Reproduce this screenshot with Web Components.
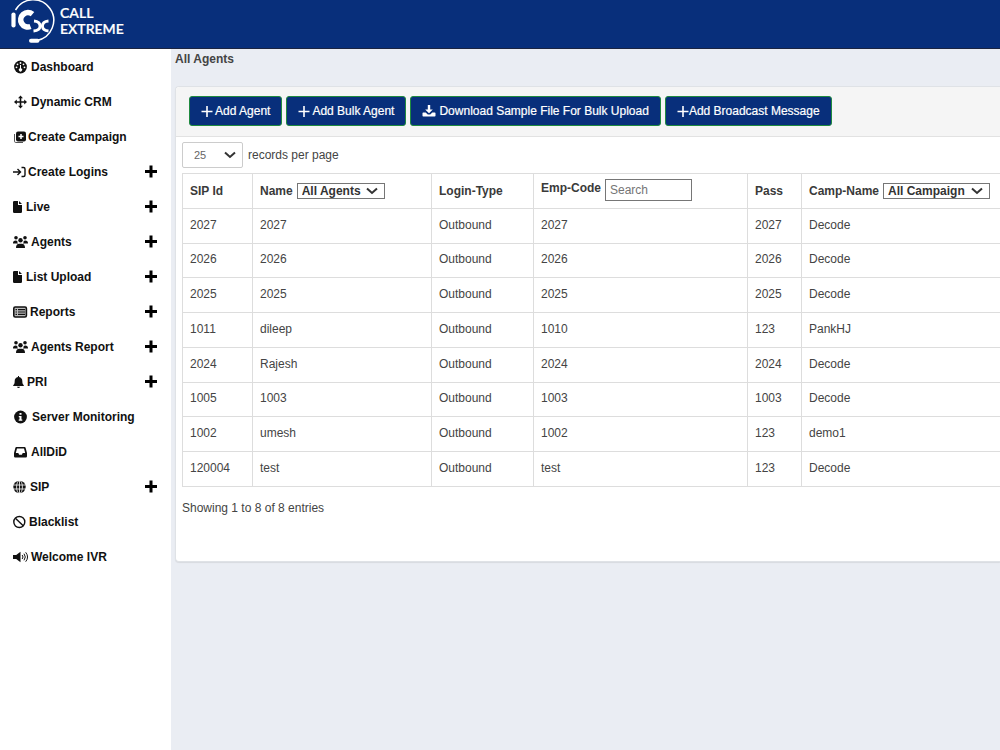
<!DOCTYPE html>
<html lang="en">
<head>
<meta charset="utf-8">
<meta name="viewport" content="width=device-width, initial-scale=1">
<title>Call Extreme - All Agents</title>
<style>
html, body { margin: 0; min-height: 100%; }
body { background: #eaedf3; font: 12px/18px "Liberation Sans", Arial, sans-serif; color: #444; }
</style>
</head>
<body>
<call-app></call-app>
<script>
const define = (name, html, setup) => {
  const template = document.createElement('template');
  template.innerHTML = html;
  customElements.define(name, class extends HTMLElement {
    constructor() {
      super();
      this.attachShadow({ mode: 'open' }).append(template.content.cloneNode(true));
    }
    connectedCallback() {
      if (setup && !this.ready) { this.ready = true; setup(this, this.shadowRoot); }
    }
  });
};

// Each icon: [width, markup]; all are 14 units high.
const people = '<circle cx="3" cy="2.800" r="1.800"/><circle cx="12" cy="2.800" r="1.800"/><circle cx="7.500" cy="5.300" r="2.200"/><path d="M0 8.200C0 6.400 1 5.400 2.600 5.400c.8 0 1.400.2 1.800.5-.2 1 .1 2 .8 2.700H.4Q0 8.600 0 8.200zM15 8.200c0-1.800-1-2.800-2.600-2.800-.8 0-1.400.2-1.800.5.2 1-.1 2-.8 2.700h4.800q.4 0 .4-.4zM3 12.400c0-2.300 1.300-3.700 3.200-3.700h2.600c1.900 0 3.200 1.400 3.200 3.700q0 .6-.6.6H3.600q-.6 0-.6-.6z"/>';
const doc = '<path d="M1.200 1H5v4h4v6.800q0 1.200-1.200 1.200H1.200Q0 13 0 11.800V2.200Q0 1 1.200 1zM6 1l3 3H6z"/>';
const ICONS = {
  dashboard: [15, '<circle cx="7.500" cy="7" r="6.400"/><g fill="#fff"><circle cx="7.500" cy="3" r=".9"/><circle cx="4.500" cy="4.300" r=".9"/><circle cx="3.500" cy="7.300" r=".9"/><circle cx="10.500" cy="4.300" r=".9"/><circle cx="11.500" cy="7.300" r=".9"/><path d="M7 5h1v3.300a1.600 1.600 0 1 1-1 0z"/></g>'],
  move: [15, '<path d="M7.500.5 10 3.300H8.300v2.900h2.900V4.500L14 7l-2.800 2.500V7.800H8.300v2.900H10l-2.500 2.800L5 10.700h1.700V7.800H3.800v1.700L1 7l2.800-2.500v1.700h2.900V3.300H5z"/>'],
  campaign: [12, '<path d="M1.500 4v7.200q0 1.300 1.300 1.300H10" fill="none" stroke="#555" stroke-width="1"/><rect x="3" y="1.500" width="10" height="10" rx="2"/><path d="M8 4v5M5.500 6.500h5" stroke="#fff" stroke-width="1.500"/>'],
  login: [12, '<path d="M0 7h7M4.500 4 7.500 7l-3 3M8.500 2.500h2q1.500 0 1.500 1.500v6q0 1.500-1.500 1.500h-2" fill="none" stroke="currentColor" stroke-width="1.400"/>'],
  file: [10, doc],
  people: [15, people],
  list: [14, '<rect x=".8" y="2" width="12.600" height="10" rx="1.400" fill="#bbb" stroke="currentColor" stroke-width="1.600"/><path d="M2.500 4.700h1.500M5 4.700h7M2.500 7h1.500M5 7h7M2.500 9.300h1.500M5 9.300h7" stroke="currentColor" stroke-width="1.200"/>'],
  bell: [11, '<path d="M5 1h1v1c2.200.4 3.300 2 3.300 4 0 2.500.5 3.400 1.500 4.200V11H.2v-.8C1.200 9.400 1.700 8.500 1.700 6c0-2 1.100-3.600 3.300-4zM4 11.700h3q-.3 1.300-1.500 1.300T4 11.700z"/>'],
  info: [16, '<circle cx="7.500" cy="7" r="6.400"/><path d="M6.500 3h2v1.800h-2zM5.800 5.900h2.700v3.500h.8v1.300H5.700V9.400h.8V7.200h-.7z" fill="#fff"/>'],
  inbox: [15, '<path d="M3.400 2h8.200q.8 0 1 .8L14 8v3.300q0 1.200-1.200 1.200H2.200Q1 12.500 1 11.300V8l1.400-5.200q.2-.8 1-.8zm.6 1.500L2.800 8h2.500l.8 1.700h2.800L9.700 8h2.500L11 3.500z" fill-rule="evenodd"/>'],
  globe: [14, '<circle cx="6.500" cy="7" r="6.200"/><path d="M0 5h13M0 9h13M6.500 0v14" stroke="#fff" stroke-width=".8"/><ellipse cx="6.500" cy="7" rx="2.900" ry="6.500" fill="none" stroke="#fff" stroke-width=".8"/>'],
  ban: [13, '<circle cx="6.300" cy="7" r="5.500" fill="none" stroke="currentColor" stroke-width="1.400"/><path d="m2.400 3.200 7.800 7.600" stroke="currentColor" stroke-width="1.400"/>'],
  volume: [15, '<path d="M0 5h3.200L7.500 1.700v10.600L3.200 9H0z"/><path d="M9.200 5q1.600 2 0 4M11 3.700q2.600 3.300 0 6.600M12.700 2.300q3.700 4.700 0 9.400" fill="none" stroke="currentColor" stroke-width="1"/>'],
  add: [12, '<path d="M6 .5v12M0 6.500h12" stroke="currentColor" stroke-width="3"/>'],
  plus: [12, '<path d="M6 2v11M.5 7.500h11" stroke="currentColor" stroke-width="1.600"/>'],
  download: [15, '<path d="M5.800 1h2.400v4.500h2.600L7 9.300 3.200 5.500h2.600z"/><path d="M1.300 8.500h2.400L5.800 10.600h2.400l2.100-2.100h2.400q.8 0 .8.8v2.400q0 .8-.8.8H1.300q-.8 0-.8-.8V9.300q0-.8.8-.8z"/>']
};

define('ui-icon', `<style>:host{display:block;flex:none}svg{display:block;overflow:visible;fill:currentColor}</style><svg height="14" aria-hidden="true"></svg>`,
  (host, root) => {
    const [width, markup] = ICONS[host.getAttribute('name')];
    const svg = root.querySelector('svg');
    svg.setAttribute('width', width);
    svg.setAttribute('viewBox', `0 0 ${width} 14`);
    svg.innerHTML = markup;
  });

define('brand-bar', `<style>
:host{display:block;background:#082f7b;border-bottom:1px solid #1b2440;color:#fff}
a{display:flex;align-items:center;gap:5px;height:48px;padding-left:10px;color:inherit;text-decoration:none;overflow:hidden}
svg{display:block;flex:none;overflow:visible}
.name{font:600 14px/16px Lato,"Liberation Sans",sans-serif;padding-bottom:7px;-webkit-text-stroke:.2px}
span{display:block}
</style>
<a href="#home" aria-label="Call Extreme">
<svg width="45" height="48" viewBox="10 0 45 48" fill="none" stroke="#fff">
<path d="M15.500 10A20.500 20.500 0 1 1 37 40.500" stroke-width="1.500"/>
<path d="M13.500 14.500v11" stroke-width="4.200" stroke-linecap="round"/>
<path d="M32.500 14.200A7.200 7.200 0 1 0 30.500 26.500" stroke-width="5.600"/>
<path d="M34 21q6 .5 6 5t-6.500 5M48.500 21q-6 .5-6 5t6 5M39 26h4" stroke-width="2.800"/>
<path d="M31 40.700h6.500" stroke-width="4" stroke-linecap="round"/>
</svg>
<div class="name"><span>CALL</span><span>EXTREME</span></div></a>`);

define('nav-item', `<style>
:host{display:block}
a{display:flex;align-items:center;gap:3px;height:35px;padding:0 14px 0 13px;color:#111;text-decoration:none;font-weight:bold}
.more{margin-left:auto;color:#000}
:host(:not([expandable])) .more{display:none}
</style><a><span class="icon"></span><slot></slot><ui-icon class="more" name="add"></ui-icon></a>`,
  (host, root) => {
    const icon = document.createElement('ui-icon');
    icon.setAttribute('name', host.getAttribute('icon'));
    root.querySelector('.icon').replaceWith(icon);
    root.querySelector('a').href = '#' + host.getAttribute('page');
  });

define('side-nav', `<style>:host{display:block;background:#fff}</style><nav aria-label="Main"><slot></slot></nav>`);

define('tool-button', `<style>
:host{display:block}
button{display:flex;align-items:center;gap:2px;height:30px;padding:0 11px;border:1px solid #1f8a3f;border-radius:3px;background:#082f7b;color:#fff;font:inherit;white-space:nowrap;-webkit-text-stroke:.2px}
:host([tight]) button{gap:0}
</style><button type="button"><slot name="icon"></slot><slot></slot></button>`);

define('panel-card', `<style>
:host{display:block;background:#fff;border:1px solid #dfe2e6;border-right:0;border-radius:4px 0 0 4px;box-shadow:0 1px 1px rgba(0,0,0,.08)}
header{display:flex;gap:4px;padding:9px 13px 10px;background:#f5f5f5;border-bottom:1px solid #e2e2e2;border-top-left-radius:4px}
.body{padding:5px 0 44px 6px}
</style><header><slot name="tools"></slot></header><div class="body"><slot></slot></div>`);

const chevron = `url("data:image/svg+xml,%3Csvg xmlns='http://www.w3.org/2000/svg' width='12' height='8' viewBox='0 0 12 8'%3E%3Cpath d='M1 1.500l5 4.500 5-4.500' fill='none' stroke='%23333' stroke-width='2'/%3E%3C/svg%3E")`;

define('agents-table', `<style>
:host{display:block}
.size{display:flex;align-items:center;gap:5px;margin-bottom:5px}
.size label{padding-bottom:1px}
select{appearance:none;margin:0;border-radius:0;color:#333;background:#fff ${chevron} no-repeat right 6px center}
.size select{width:61px;height:26px;padding:0 11px;border:1px solid #ccc;border-radius:2px;font:11px "Liberation Sans",sans-serif;color:#666}
table{width:100%;border-collapse:collapse;table-layout:fixed}
th,td{padding:0 7px;border:1px solid #ddd;text-align:left;vertical-align:middle;white-space:nowrap;box-sizing:border-box}
tr>:last-child{border-right:0}
thead th{height:35px;color:#3a3a3a}
tbody td{height:35px;padding-bottom:3px}
tbody tr:nth-child(4n+2) td{height:34px}
th label{display:flex;align-items:center;gap:4px}
th select{height:16px;padding:0 4px;border:1px solid #767676;font:bold 12px/14px "Liberation Sans",sans-serif}
.agents{width:88px}.camps{width:107px}
th label.search{align-items:flex-start;padding-bottom:2px}
input{box-sizing:border-box;width:87px;height:22px;margin:0;padding:0 4px;border:1px solid #767676;font:12px "Liberation Sans",sans-serif}
input::placeholder{color:#757575}
p{margin:12px 0 0}
.c1{width:70px}.c2{width:179px}.c3{width:102px}.c4{width:214px}.c5{width:54px}
</style>
<div class="size"><select id="size"><option>25</option></select><label for="size">records per page</label></div>
<table>
<colgroup><col class="c1"><col class="c2"><col class="c3"><col class="c4"><col class="c5"><col></colgroup>
<thead><tr><th>SIP Id</th><th><label>Name <select class="agents"><option>All Agents</option></select></label></th><th>Login-Type</th><th><label class="search">Emp-Code <input type="text" placeholder="Search"></label></th><th>Pass</th><th><label>Camp-Name <select class="camps"><option>All Campaign</option></select></label></th></tr></thead>
<tbody></tbody></table>
<p>Showing 1 to 8 of 8 entries</p>`,
  (host, root) => {
    const rows = [
      ['2027', '2027', 'Outbound', '2027', '2027', 'Decode'],
      ['2026', '2026', 'Outbound', '2026', '2026', 'Decode'],
      ['2025', '2025', 'Outbound', '2025', '2025', 'Decode'],
      ['1011', 'dileep', 'Outbound', '1010', '123', 'PankHJ'],
      ['2024', 'Rajesh', 'Outbound', '2024', '2024', 'Decode'],
      ['1005', '1003', 'Outbound', '1003', '1003', 'Decode'],
      ['1002', 'umesh', 'Outbound', '1002', '123', 'demo1'],
      ['120004', 'test', 'Outbound', 'test', '123', 'Decode']
    ];
    const body = root.querySelector('tbody');
    for (const row of rows) {
      const tr = body.insertRow();
      for (const value of row) tr.insertCell().textContent = value;
    }
  });

define('call-app', `<style>
:host{display:flex;flex-direction:column;min-height:100vh}
.layout{flex:1;display:grid;grid-template-columns:171px minmax(0,1fr)}
main{padding:1px 0 24px 4px}
h1{margin:0 0 18px;font-size:12px;line-height:18px;color:#444}
</style>
<brand-bar></brand-bar>
<div class="layout">
<side-nav>
<nav-item icon="dashboard" page="dashboard">Dashboard</nav-item>
<nav-item icon="move" page="crm">Dynamic CRM</nav-item>
<nav-item icon="campaign" page="campaign">Create Campaign</nav-item>
<nav-item icon="login" page="logins" expandable>Create Logins</nav-item>
<nav-item icon="file" page="live" expandable>Live</nav-item>
<nav-item icon="people" page="agents" expandable>Agents</nav-item>
<nav-item icon="file" page="lists" expandable>List Upload</nav-item>
<nav-item icon="list" page="reports" expandable>Reports</nav-item>
<nav-item icon="people" page="agents-report" expandable>Agents Report</nav-item>
<nav-item icon="bell" page="pri" expandable>PRI</nav-item>
<nav-item icon="info" page="monitoring">Server Monitoring</nav-item>
<nav-item icon="inbox" page="did">AllDiD</nav-item>
<nav-item icon="globe" page="sip" expandable>SIP</nav-item>
<nav-item icon="ban" page="blacklist">Blacklist</nav-item>
<nav-item icon="volume" page="ivr">Welcome IVR</nav-item>
</side-nav>
<main>
<h1>All Agents</h1>
<panel-card>
<tool-button slot="tools"><ui-icon slot="icon" name="plus"></ui-icon>Add Agent</tool-button>
<tool-button slot="tools"><ui-icon slot="icon" name="plus"></ui-icon>Add Bulk Agent</tool-button>
<tool-button slot="tools"><ui-icon slot="icon" name="download"></ui-icon>Download Sample File For Bulk Upload</tool-button>
<tool-button slot="tools" tight><ui-icon slot="icon" name="plus"></ui-icon>Add Broadcast Message</tool-button>
<agents-table></agents-table>
</panel-card>
</main>
</div>`);
</script>
</body>
</html>
